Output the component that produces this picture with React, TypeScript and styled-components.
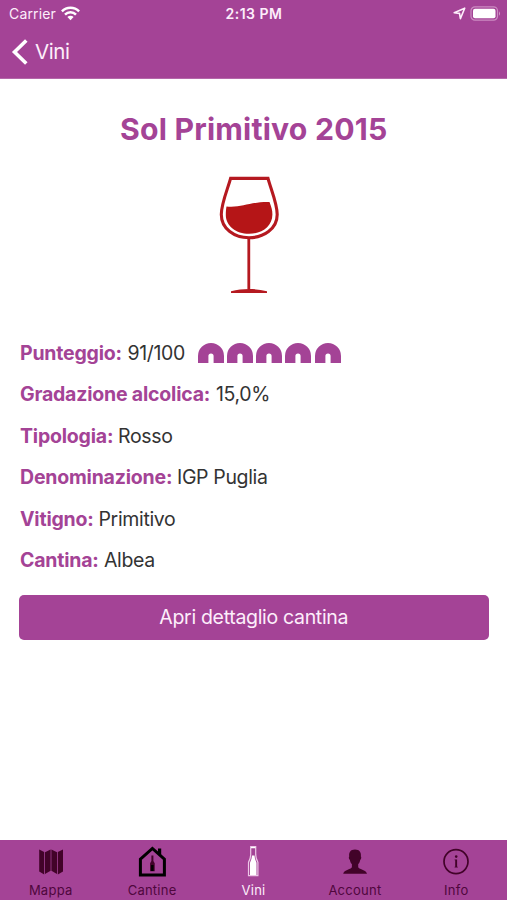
import React from 'react';
import styled, { createGlobalStyle } from 'styled-components';

const purple = '#a44396';
const dark = '#420329';

const GlobalStyle = createGlobalStyle`
  * { box-sizing: border-box; }
  body { margin: 0; background: #fff; }
`;

const Screen = styled.div`
  width: 507px;
  height: 900px;
  display: flex;
  flex-direction: column;
  background: #fff;
  font-family: Inter, 'Liberation Sans', sans-serif;
  overflow: hidden;
  white-space: nowrap;
`;

const Header = styled.header`
  height: 79px;
  background: ${purple};
  border-bottom: 1px solid #b468a9;
  color: #fdeefb;
`;

const StatusBar = styled.div`
  height: 27px;
  display: grid;
  grid-template-columns: 1fr auto 1fr;
  align-items: center;
  padding: 0 6px 0 9px;
  font-size: 14px;
`;

const Carrier = styled.div`
  display: flex;
  align-items: center;
  gap: 5px;
  letter-spacing: 0.15px;
`;

const Clock = styled.div`
  font-weight: 600;
  letter-spacing: 0.5px;
  margin-right: 2px;
`;

const StatusIcons = styled.div`
  display: flex;
  justify-content: flex-end;
  align-items: center;
  gap: 4px;
`;

const BackButton = styled.div`
  height: 49px;
  display: flex;
  align-items: center;
  gap: 7px;
  padding-left: 11px;
  font-size: 20.5px;
  letter-spacing: -0.4px;
`;

const Content = styled.main`
  flex: 1;
  padding: 31px 18.5px 0 19px;
  display: flex;
  flex-direction: column;
`;

const Title = styled.h1`
  margin: 0;
  height: 38px;
  line-height: 38px;
  text-align: center;
  color: ${purple};
  font-size: 30.2px;
  font-weight: 700;
  letter-spacing: 0.2px;
`;

const Glass = styled.svg`
  display: block;
  width: 62px;
  height: 120px;
  margin: 27px 0 0 199px;
`;

const Details = styled.div`
  margin-top: 37px;
`;

const Row = styled.div`
  display: flex;
  align-items: center;
  height: 41.5px;
  padding-left: 1px;
  font-size: 19.5px;
  color: #333;
`;

const Label = styled.span<{ $width: number }>`
  width: ${p => p.$width}px;
  color: ${purple};
  font-weight: 700;
  letter-spacing: -0.2px;
`;

const Value = styled.span`
  letter-spacing: -0.35px;
`;

const Rating = styled.div`
  display: flex;
  gap: 3.3px;
  margin: 1px 0 0 12.5px;
`;

const OpenButton = styled.button`
  height: 45.5px;
  margin-top: 13.5px;
  padding: 0 0 1px;
  border: 0;
  border-radius: 5px;
  background: ${purple};
  color: #fdeefb;
  font: 400 19.5px Inter, sans-serif;
  letter-spacing: -0.32px;
`;

const TabBar = styled.nav`
  height: 60px;
  display: grid;
  grid-template-columns: repeat(5, 1fr);
  background: ${purple};
`;

const Tab = styled.div<{ $active?: boolean }>`
  display: flex;
  flex-direction: column;
  align-items: center;
  color: ${p => (p.$active ? '#fdeefb' : '#4f073d')};
  font-size: 13px;
  line-height: 16px;
  letter-spacing: 0.25px;
`;

const TabIcon = styled.svg`
  width: 36px;
  height: 36px;
  margin: 4px 0 2px;
`;

const Arch = () => (
  <svg width="26" height="20" viewBox="0 0 26 20">
    <path fill={purple} d="M0 20V13a13 13 0 0 1 26 0v7H15.6v-7a2.6 2.6 0 0 0-5.2 0V20Z" />
  </svg>
);

const rows = [
  { label: 'Gradazione alcolica:', value: '15,0%', width: 196 },
  { label: 'Tipologia:', value: 'Rosso', width: 98 },
  { label: 'Denominazione:', value: 'IGP Puglia', width: 157 },
  { label: 'Vitigno:', value: 'Primitivo', width: 78.5 },
  { label: 'Cantina:', value: 'Albea', width: 84 },
];

export default function App() {
  return (
    <>
      <GlobalStyle />
      <Screen>
        <Header>
          <StatusBar>
            <Carrier>
              Carrier
              <svg width="19" height="15" viewBox="0 0 19 15" fill="none" stroke="#fff" strokeWidth="2.5">
                <path d="M.9 5.4a12.2 12.2 0 0 1 17.2 0M4 8.6a7.8 7.8 0 0 1 11 0" />
                <path d="M6.4 11a4.4 4.4 0 0 1 6.2 0L9.5 14.3Z" fill="#fff" stroke="none" />
              </svg>
            </Carrier>
            <Clock>2:13 PM</Clock>
            <StatusIcons>
              <svg width="13" height="13" viewBox="0 0 13 13" fill="none" stroke="#fdeefb" strokeWidth="1.6" strokeLinejoin="round">
                <path d="M1.2 5.8 11.7 1.2 7.4 11.6 6.5 6.4Z" />
              </svg>
              <svg width="31" height="15" viewBox="0 0 31 15">
                <rect x="1" y=".8" width="26.5" height="13.4" rx="4" fill="none" stroke="#cc8cc2" strokeWidth="1.2" />
                <rect x="3" y="2.8" width="22.5" height="9.4" rx="2" fill="#fff" />
                <path d="M29 5.2q2 2.3 0 4.6Z" fill="#d49bcb" />
              </svg>
            </StatusIcons>
          </StatusBar>
          <BackButton>
            <svg width="17" height="26" viewBox="0 0 17 26" fill="none" stroke="#fff" strokeWidth="3.6">
              <path d="M15.3 1.5 3.5 13l11.8 11.5" />
            </svg>
            Vini
          </BackButton>
        </Header>
        <Content>
          <Title>Sol Primitivo 2015</Title>
          <Glass viewBox="0 0 62 120">
            <path d="M12.6 3.4H50C52.8 14 59.2 28.5 59.2 39.5 59.2 54 45.5 62.7 31 62.7S3.3 54 3.3 39.5C3.3 28.5 9.7 14 12.6 3.4Z" fill="none" stroke="#b51920" strokeWidth="3.1" />
            <path d="M8.5 31.5C24 33 33 26.5 51.5 27c1.9 5 2.9 8 2.9 12.5 0 11.8-10.5 19.3-23.4 19.3S7.8 51 7.8 40c0-3.5.2-5.7.7-8.5Z" fill="#b51517" />
            <path d="M30.8 63v51" stroke="#b51920" strokeWidth="2.8" />
            <path d="M13 118v-1.7c6-1.5 12-2.3 18-2.3s12 .8 18 2.3v1.7Z" fill="#b51920" />
          </Glass>
          <Details>
            <Row>
              <Label $width={107.5}>Punteggio:</Label>
              <Value>91/100</Value>
              <Rating>{[0, 1, 2, 3, 4].map(n => <Arch key={n} />)}</Rating>
            </Row>
            {rows.map(r => (
              <Row key={r.label}>
                <Label $width={r.width}>{r.label}</Label>
                <Value>{r.value}</Value>
              </Row>
            ))}
          </Details>
          <OpenButton>Apri dettaglio cantina</OpenButton>
        </Content>
        <TabBar>
          <Tab>
            <TabIcon viewBox="0 0 36 36" fill={dark}>
              <path d="M6.2 5.4 11.2 8v22.4l-5-3Z" />
              <path d="M12 8.3 17.6 5.4v21.4L12 30.1Z" />
              <path d="M18.4 5.4 24 8.3v21.8l-5.6-3.3Z" />
              <path d="M24.8 8 30 5.4v22L24.8 30.4Z" />
            </TabIcon>
            Mappa
          </Tab>
          <Tab>
            <TabIcon viewBox="0 0 36 36">
              <path d="M6.4 31V15.2L18.4 4.5l12 10.7V31Z" fill="none" stroke="#000" strokeWidth="3" />
              <path d="M24 4.5h3.2V12L24 9Z" />
              <path d="M17.4 11.5h2V17l1.3 2.2v8h-4.6v-8l1.3-2.2Z" fill={dark} />
              <path d="M17.1 21h2.5v6h-2.5Z" />
            </TabIcon>
            Cantine
          </Tab>
          <Tab $active>
            <TabIcon viewBox="0 0 36 36">
              <path d="M15.7 2.7h5v8.2q.2 4 2.2 7.5v13.2H13.5V18.4q2-3.5 2.2-7.5Z" fill="none" stroke="#edc7e7" strokeWidth="1.2" />
              <path d="M16 3h4.4v1.2H16ZM17 11.5h2.5q.3 4.2 2 7.3V31h-6.5V18.8q1.7-3.1 2-7.3Z" fill="#fff" />
            </TabIcon>
            Vini
          </Tab>
          <Tab>
            <TabIcon viewBox="0 0 36 36" fill={dark}>
              <path d="M18 5.6c4.6 0 6.3 2.8 5.9 6.8.8.7.2 3-.7 3.5-.3 2-1 3.2-2 4.2v2.8c0 2.3 8.3 2.6 8.8 6.8H6.2c.5-4.2 8.7-4.5 8.7-6.8v-2.8c-1-1-1.7-2.2-2-4.2-.9-.5-1.5-2.8-.7-3.5-.4-4 1.2-6.8 5.8-6.8Z" />
            </TabIcon>
            Account
          </Tab>
          <Tab>
            <TabIcon viewBox="0 0 36 36">
              <circle cx="18" cy="17.6" r="12" fill="none" stroke={dark} strokeWidth="1.7" />
              <circle cx="18.2" cy="12.6" r="1.3" fill={dark} />
              <path d="M16.6 15.4h2.5v7.4h.7v.8h-3.2v-.8h.6v-6.6h-.6Z" fill={dark} />
            </TabIcon>
            Info
          </Tab>
        </TabBar>
      </Screen>
    </>
  );
}
